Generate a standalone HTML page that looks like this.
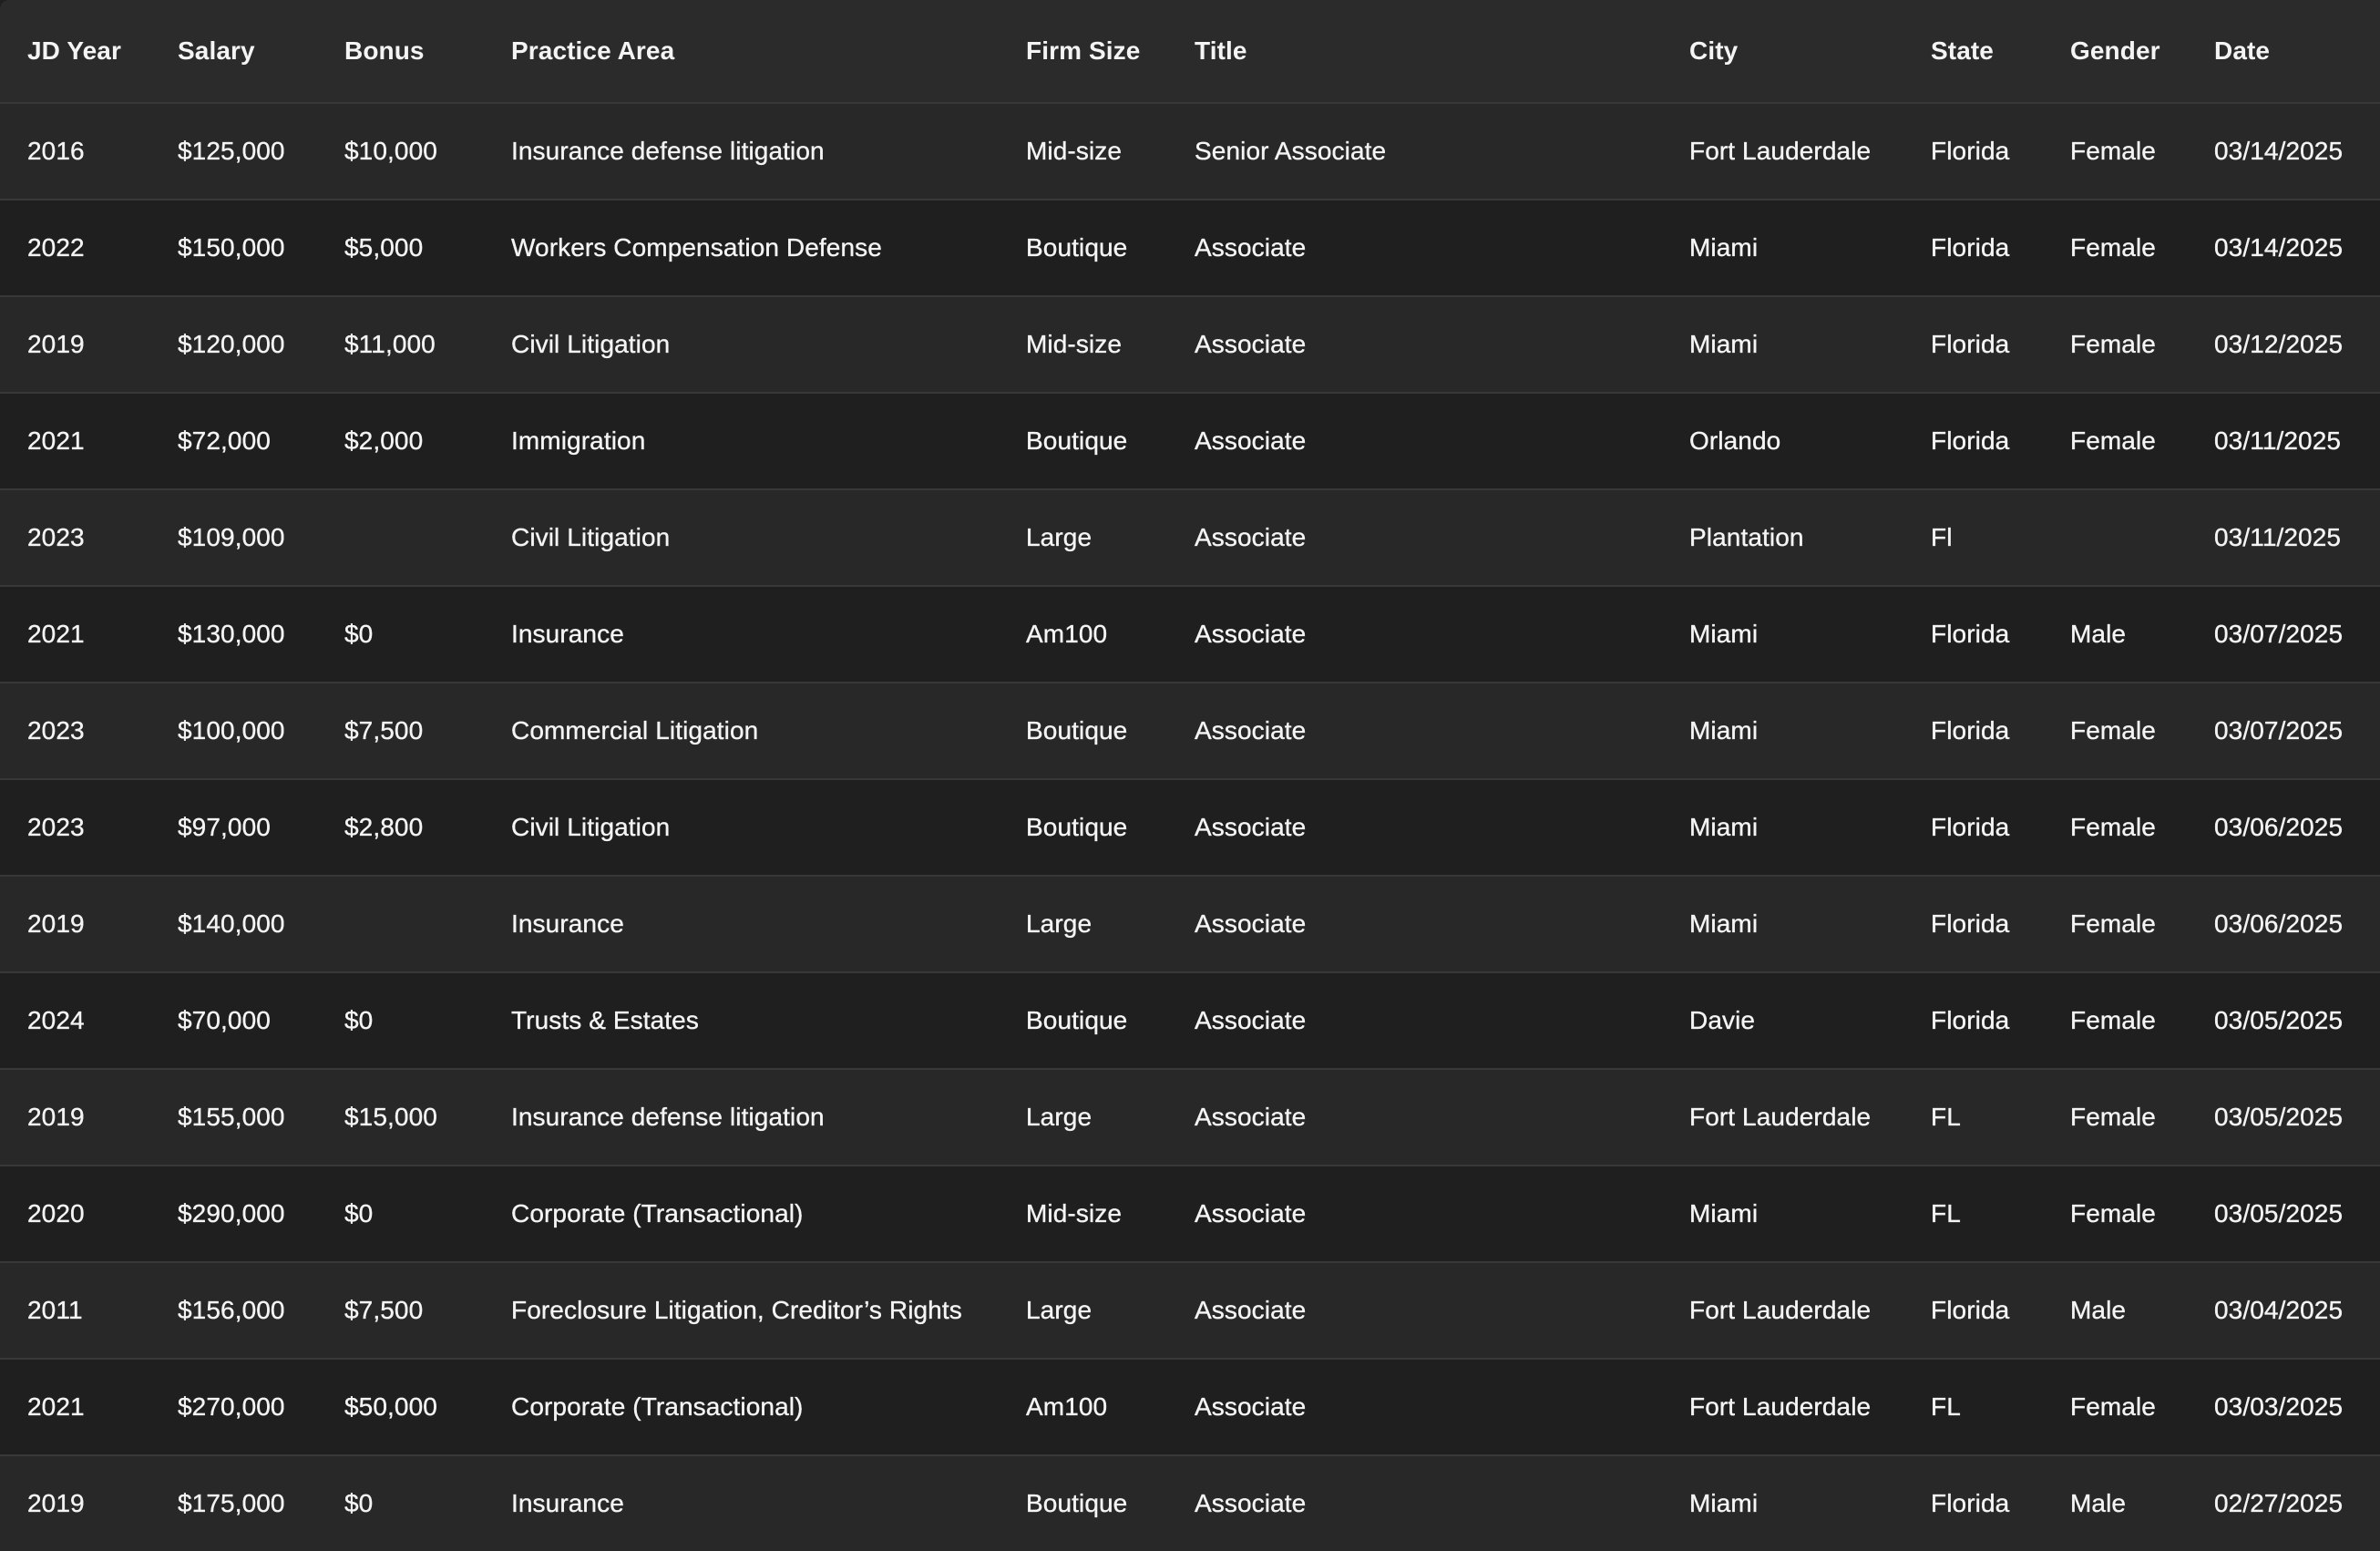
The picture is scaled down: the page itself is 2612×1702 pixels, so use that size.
<!DOCTYPE html>
<html><head><meta charset="utf-8"><style>
html,body{margin:0;padding:0;background:#1f1f1f;}
body{width:2612px;height:1698px;overflow:hidden;font-family:"Liberation Sans",Arial,sans-serif;color:#f4f4f4;font-size:28px;letter-spacing:0.1px;-webkit-text-stroke:0.35px #f4f4f4;}
.r{position:absolute;left:0;width:2612px;height:104px;border-top:2px solid #383838;}
.h{position:absolute;left:0;top:0;width:2612px;height:112px;background:#2b2b2b;font-weight:bold;border-radius:10px 0 0 0;-webkit-text-stroke:0;}
.r span,.h span{position:absolute;top:50%;transform:translateY(-50%);white-space:nowrap;}
.o{background:#282828}.e{background:#1f1f1f}
.c1{left:30px}.c2{left:195px}.c3{left:378px}.c4{left:561px}.c5{left:1126px}.c6{left:1311px}.c7{left:1854px}.c8{left:2119px}.c9{left:2272px}.c10{left:2430px}
</style></head><body>
<div class="h"><span class="c1">JD Year</span><span class="c2">Salary</span><span class="c3">Bonus</span><span class="c4">Practice Area</span><span class="c5">Firm Size</span><span class="c6">Title</span><span class="c7">City</span><span class="c8">State</span><span class="c9">Gender</span><span class="c10">Date</span></div>
<div class="r o" style="top:112px"><span class="c1">2016</span><span class="c2">$125,000</span><span class="c3">$10,000</span><span class="c4">Insurance defense litigation</span><span class="c5">Mid-size</span><span class="c6">Senior Associate</span><span class="c7">Fort Lauderdale</span><span class="c8">Florida</span><span class="c9">Female</span><span class="c10">03/14/2025</span></div>
<div class="r e" style="top:218px"><span class="c1">2022</span><span class="c2">$150,000</span><span class="c3">$5,000</span><span class="c4">Workers Compensation Defense</span><span class="c5">Boutique</span><span class="c6">Associate</span><span class="c7">Miami</span><span class="c8">Florida</span><span class="c9">Female</span><span class="c10">03/14/2025</span></div>
<div class="r o" style="top:324px"><span class="c1">2019</span><span class="c2">$120,000</span><span class="c3">$11,000</span><span class="c4">Civil Litigation</span><span class="c5">Mid-size</span><span class="c6">Associate</span><span class="c7">Miami</span><span class="c8">Florida</span><span class="c9">Female</span><span class="c10">03/12/2025</span></div>
<div class="r e" style="top:430px"><span class="c1">2021</span><span class="c2">$72,000</span><span class="c3">$2,000</span><span class="c4">Immigration</span><span class="c5">Boutique</span><span class="c6">Associate</span><span class="c7">Orlando</span><span class="c8">Florida</span><span class="c9">Female</span><span class="c10">03/11/2025</span></div>
<div class="r o" style="top:536px"><span class="c1">2023</span><span class="c2">$109,000</span><span class="c4">Civil Litigation</span><span class="c5">Large</span><span class="c6">Associate</span><span class="c7">Plantation</span><span class="c8">Fl</span><span class="c10">03/11/2025</span></div>
<div class="r e" style="top:642px"><span class="c1">2021</span><span class="c2">$130,000</span><span class="c3">$0</span><span class="c4">Insurance</span><span class="c5">Am100</span><span class="c6">Associate</span><span class="c7">Miami</span><span class="c8">Florida</span><span class="c9">Male</span><span class="c10">03/07/2025</span></div>
<div class="r o" style="top:748px"><span class="c1">2023</span><span class="c2">$100,000</span><span class="c3">$7,500</span><span class="c4">Commercial Litigation</span><span class="c5">Boutique</span><span class="c6">Associate</span><span class="c7">Miami</span><span class="c8">Florida</span><span class="c9">Female</span><span class="c10">03/07/2025</span></div>
<div class="r e" style="top:854px"><span class="c1">2023</span><span class="c2">$97,000</span><span class="c3">$2,800</span><span class="c4">Civil Litigation</span><span class="c5">Boutique</span><span class="c6">Associate</span><span class="c7">Miami</span><span class="c8">Florida</span><span class="c9">Female</span><span class="c10">03/06/2025</span></div>
<div class="r o" style="top:960px"><span class="c1">2019</span><span class="c2">$140,000</span><span class="c4">Insurance</span><span class="c5">Large</span><span class="c6">Associate</span><span class="c7">Miami</span><span class="c8">Florida</span><span class="c9">Female</span><span class="c10">03/06/2025</span></div>
<div class="r e" style="top:1066px"><span class="c1">2024</span><span class="c2">$70,000</span><span class="c3">$0</span><span class="c4">Trusts &amp; Estates</span><span class="c5">Boutique</span><span class="c6">Associate</span><span class="c7">Davie</span><span class="c8">Florida</span><span class="c9">Female</span><span class="c10">03/05/2025</span></div>
<div class="r o" style="top:1172px"><span class="c1">2019</span><span class="c2">$155,000</span><span class="c3">$15,000</span><span class="c4">Insurance defense litigation</span><span class="c5">Large</span><span class="c6">Associate</span><span class="c7">Fort Lauderdale</span><span class="c8">FL</span><span class="c9">Female</span><span class="c10">03/05/2025</span></div>
<div class="r e" style="top:1278px"><span class="c1">2020</span><span class="c2">$290,000</span><span class="c3">$0</span><span class="c4">Corporate (Transactional)</span><span class="c5">Mid-size</span><span class="c6">Associate</span><span class="c7">Miami</span><span class="c8">FL</span><span class="c9">Female</span><span class="c10">03/05/2025</span></div>
<div class="r o" style="top:1384px"><span class="c1">2011</span><span class="c2">$156,000</span><span class="c3">$7,500</span><span class="c4">Foreclosure Litigation, Creditor’s Rights</span><span class="c5">Large</span><span class="c6">Associate</span><span class="c7">Fort Lauderdale</span><span class="c8">Florida</span><span class="c9">Male</span><span class="c10">03/04/2025</span></div>
<div class="r e" style="top:1490px"><span class="c1">2021</span><span class="c2">$270,000</span><span class="c3">$50,000</span><span class="c4">Corporate (Transactional)</span><span class="c5">Am100</span><span class="c6">Associate</span><span class="c7">Fort Lauderdale</span><span class="c8">FL</span><span class="c9">Female</span><span class="c10">03/03/2025</span></div>
<div class="r o" style="top:1596px"><span class="c1">2019</span><span class="c2">$175,000</span><span class="c3">$0</span><span class="c4">Insurance</span><span class="c5">Boutique</span><span class="c6">Associate</span><span class="c7">Miami</span><span class="c8">Florida</span><span class="c9">Male</span><span class="c10">02/27/2025</span></div>
</body></html>
